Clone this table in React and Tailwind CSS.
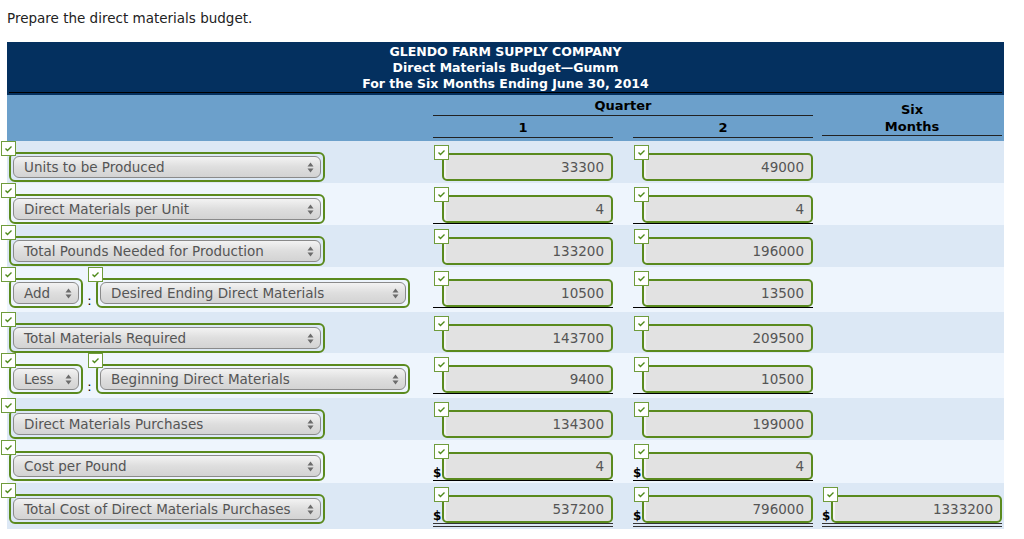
import React from "react";

const rows = [
  { label: "Units to be Produced", h: "h-[42px]", bg: "bg-[#dce8f5]", v: ["33300", "49000"] },
  { label: "Direct Materials per Unit", h: "h-[42px]", bg: "bg-[#eef5fd]", v: ["4", "4"], line: "single" },
  { label: "Total Pounds Needed for Production", h: "h-[42px]", bg: "bg-[#dce8f5]", v: ["133200", "196000"] },
  { op: "Add", label: "Desired Ending Direct Materials", h: "h-[45px]", bg: "bg-[#eef5fd]", v: ["10500", "13500"], line: "single" },
  { label: "Total Materials Required", h: "h-[41px]", bg: "bg-[#dce8f5]", v: ["143700", "209500"] },
  { op: "Less", label: "Beginning Direct Materials", h: "h-[45px]", bg: "bg-[#eef5fd]", v: ["9400", "10500"], line: "single" },
  { label: "Direct Materials Purchases", h: "h-[42px]", bg: "bg-[#dce8f5]", v: ["134300", "199000"] },
  { label: "Cost per Pound", h: "h-[43px]", bg: "bg-[#eef5fd]", v: ["4", "4"], line: "single", dollar: true },
  {
    label: "Total Cost of Direct Materials Purchases",
    h: "h-[46px]",
    bg: "bg-[#dce8f5]",
    v: ["537200", "796000"],
    six: "1333200",
    line: "double",
    dollar: true,
  },
];

const Check = ({ className }) => (
  <span
    className={`absolute w-[15px] h-[15px] bg-white border border-[#6f9c3c] flex items-center justify-center z-10 ${className}`}
  >
    <svg width="11" height="11" viewBox="0 0 11 11">
      <polyline points="2.5,5.5 4.5,7.5 8.5,3.5" fill="none" stroke="#4f8a1a" strokeWidth="1.4" />
    </svg>
  </span>
);

const Arrows = () => (
  <svg width="7" height="11" viewBox="0 0 7 11" className="shrink-0">
    <polygon points="0.5,4.5 3.5,0.5 6.5,4.5" fill="#6b6b6b" />
    <polygon points="0.5,6.5 3.5,10.5 6.5,6.5" fill="#6b6b6b" />
  </svg>
);

const Select = ({ text, width }) => (
  <div className={`relative h-[30px] rounded-[6px] border-2 border-[#5a8a1e] p-[2px] ${width}`}>
    <Check className="-left-[10px] -top-[13px]" />
    <div className="h-full rounded-[6px] border border-[#8a8a8a] bg-gradient-to-b from-[#f3f3f3] via-[#dedede] to-[#d3d3d3] flex items-center justify-between pl-[10px] pr-[6px] text-[13.5px] text-[#555]">
      <span className="whitespace-nowrap">{text}</span>
      <Arrows />
    </div>
  </div>
);

const NumCell = ({ value, line, dollar, className = "" }) => (
  <div
    className={`w-[180px] flex items-end mt-[1px] ${
      line === "single" ? "border-b border-black" : ""
    } ${line === "double" ? "border-b-4 border-double border-[#333]" : ""} ${className}`}
  >
    <span className="w-[9px] text-[12px] font-bold text-black leading-[14px]">{dollar ? "$" : ""}</span>
    <div className="relative flex-1 h-[28px] rounded-[5px] border-2 border-[#5a8a1e] bg-[#e2e2e2] shadow-[inset_2px_0_0_#f4f4f4] flex items-center justify-end pr-[7px] text-[13.5px] text-[#555]">
      <Check className="-left-[10px] -top-[10px]" />
      {value}
    </div>
  </div>
);

export default function App() {
  return (
    <div className="min-h-screen bg-white font-['DejaVu_Sans',Verdana,sans-serif] pt-[9px]">
      <p className="ml-[7px] text-[13.5px] text-[#222] leading-[18px]">Prepare the direct materials budget.</p>

      <div className="ml-[7px] mt-[15px] w-[997px]">
        {/* title band */}
        <div className="bg-[#04305f] h-[53px] pt-[2px] px-[2px]">
          <div className="border-b border-black h-[49px] text-center text-white font-bold text-[12.5px] leading-[16px]">
            <div>GLENDO FARM SUPPLY COMPANY</div>
            <div>Direct Materials Budget—Gumm</div>
            <div>For the Six Months Ending June 30, 2014</div>
          </div>
        </div>

        {/* column headings */}
        <div className="bg-[#6ca0cb] h-[46px] flex text-black font-bold text-[13px]">
          <div className="w-[426px]" />
          <div className="w-[380px]">
            <div className="h-[21px] pt-[3px] text-center leading-[16px] border-b border-[#222]">Quarter</div>
            <div className="flex justify-between">
              <div className="w-[180px] h-[22px] pt-[4px] text-center leading-[16px] border-b border-[#222]">1</div>
              <div className="w-[180px] h-[22px] pt-[4px] text-center leading-[16px] border-b border-[#222]">2</div>
            </div>
          </div>
          <div className="ml-[9px] w-[180px] h-[41px] pt-[6px] text-center leading-[17px] border-b border-[#222]">
            <div>Six</div>
            <div>Months</div>
          </div>
        </div>

        {rows.map((r) => (
          <div key={r.label} className={`flex items-start pt-[11px] ${r.h} ${r.bg}`}>
            <div className="w-[426px] pl-[2px] flex items-end">
              {r.op ? (
                <>
                  <Select text={r.op} width="w-[74px]" />
                  <span className="w-[13px] text-center text-[13px] leading-[14px] text-black">:</span>
                  <Select text={r.label} width="w-[314px]" />
                </>
              ) : (
                <Select text={r.label} width="w-[316px]" />
              )}
            </div>
            <NumCell value={r.v[0]} line={r.line} dollar={r.dollar} />
            <NumCell value={r.v[1]} line={r.line} dollar={r.dollar} className="ml-[20px]" />
            {r.six && <NumCell value={r.six} line={r.line} dollar={r.dollar} className="ml-[9px]" />}
          </div>
        ))}
      </div>
    </div>
  );
}
